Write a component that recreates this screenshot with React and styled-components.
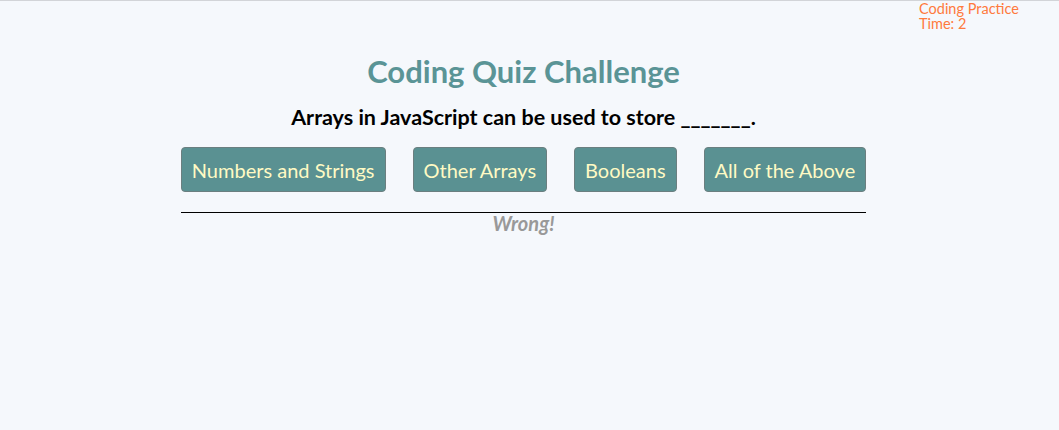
import React from 'react';
import styled, { createGlobalStyle } from 'styled-components';

const GlobalStyle = createGlobalStyle`
   html, body {
      margin: 0;
      padding: 0;
      background: #f5f8fc;
      font-family: 'Trebuchet MS', Lato, 'Open Sans', sans-serif;
   }
`;

const Page = styled.div`
   position: relative;
   min-height: 430px;
   border-top: 1px solid #d2d4d8;
   box-sizing: border-box;
`;

const Main = styled.main`
   display: flex;
   flex-direction: column;
   align-items: center;
   padding: 51px 12px 0 0;
`;

const Header = styled.header`
   position: absolute;
   top: 0;
   left: 919px;
   color: #ff7a3d;
   font-size: 14.5px;
   line-height: 15px;
`;

const Title = styled.h1`
   margin: 0;
   color: #5a9496;
   font-size: 31px;
   font-weight: bold;
`;

const Question = styled.h2`
   margin: 14px 0 0;
   color: #000;
   font-size: 21.5px;
   font-weight: bold;
`;

const Choices = styled.div`
   display: flex;
   gap: 27px;
   margin-top: 17px;
`;

const Choice = styled.button`
   height: 45px;
   padding: 0 10px;
   background: #5a9192;
   color: #fffac4;
   border: 1px solid #6b7f80;
   border-radius: 4px;
   font-family: inherit;
   font-size: 20px;
   cursor: pointer;
`;

const Result = styled.div`
   margin-top: 20px;
   width: 685px;
   border-top: 1px solid #000;
   text-align: center;
   color: #999;
   font-style: italic;
   font-weight: bold;
   font-size: 20px;
   line-height: 21px;
`;

const choices = ['Numbers and Strings', 'Other Arrays', 'Booleans', 'All of the Above'];

export default function App() {
   return (
      <Page>
         <GlobalStyle />
         <Main>
            <Title>Coding Quiz Challenge</Title>
            <Question>Arrays in JavaScript can be used to store _______.</Question>
            <Choices>
               {choices.map(c => (
                  <Choice key={c}>{c}</Choice>
               ))}
            </Choices>
            <Result>Wrong!</Result>
         </Main>
         <Header>
            Coding Practice
            <br />
            Time: 2
         </Header>
      </Page>
   );
}
